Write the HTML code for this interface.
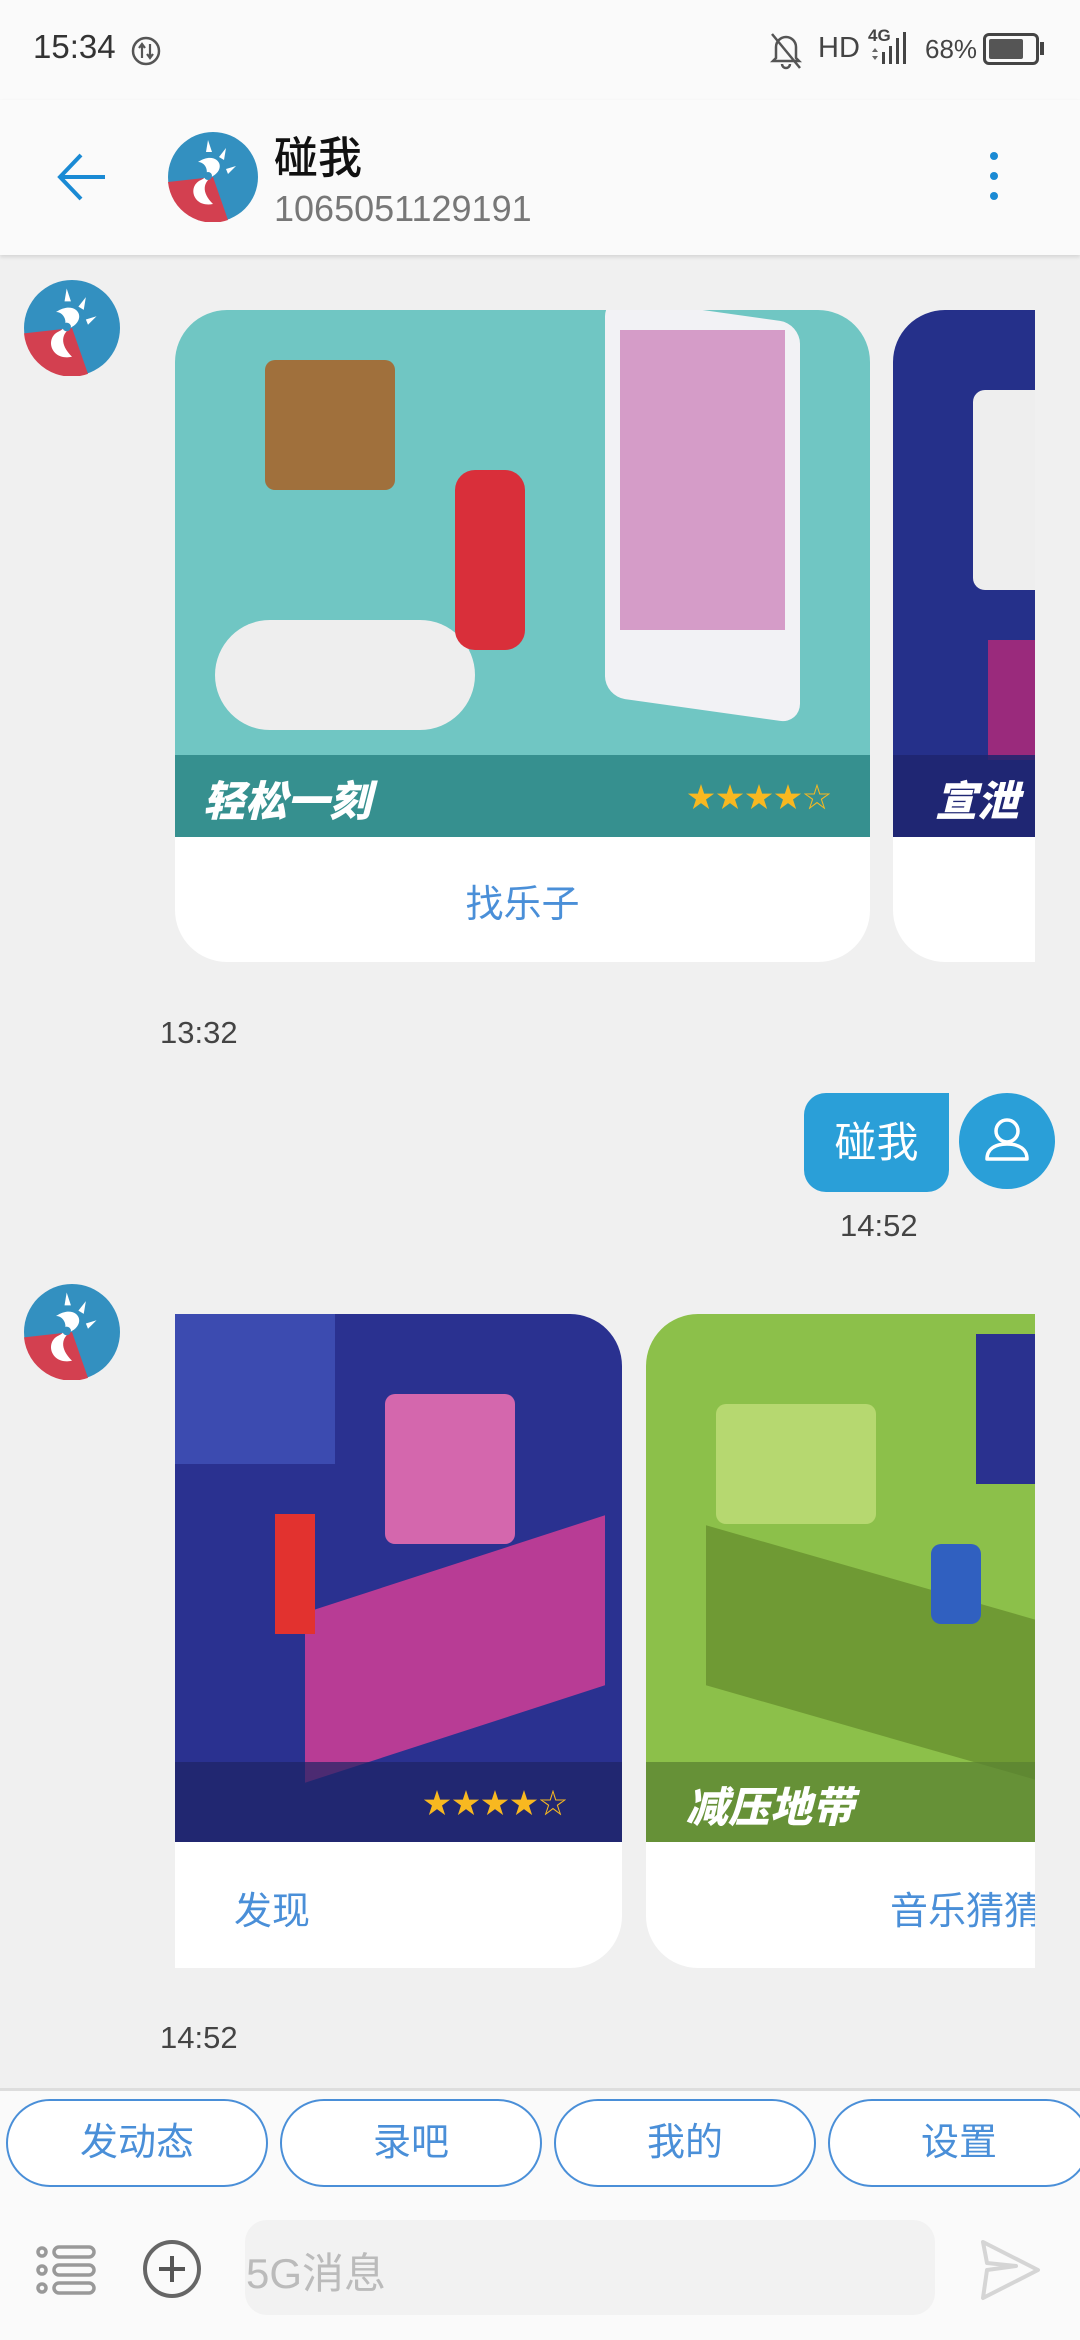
<!DOCTYPE html>
<html><head><meta charset="utf-8">
<style>
*{margin:0;padding:0;box-sizing:border-box}
body{width:1080px;height:2340px;background:#f0f0f0;font-family:"Liberation Sans","Noto Sans CJK SC",sans-serif;position:relative;overflow:hidden}
.abs{position:absolute}
.status{left:0;top:0;width:1080px;height:100px;background:#fafafa}
.header{left:0;top:100px;width:1080px;height:155px;background:#fafafa;box-shadow:0 2px 4px rgba(0,0,0,.12)}
.av{border-radius:50%;overflow:hidden}
.card{background:#fff;border-radius:52px;overflow:hidden}
.btxt{color:#4a8fd8;font-size:38px}
.time{color:#444;font-size:31px}
.qb{top:2099px;height:88px;border:2px solid #4a8fd8;border-radius:44px;background:#fff;color:#4a8fd8;font-size:38px;text-align:center;line-height:84px}
</style></head><body>
<div class="abs status"></div>
<div class="abs" style="left:33px;top:28px;font-size:33px;color:#333">15:34</div>
<svg class="abs" style="left:130px;top:35px" width="32" height="32" viewBox="0 0 32 32"><circle cx="16" cy="16" r="13" fill="none" stroke="#555" stroke-width="2.5"/><path d="M12 9v14M20 9v14M9 13l3-4 3 4M17 19l3 4 3-4" fill="none" stroke="#555" stroke-width="2.2"/></svg>
<svg class="abs" style="left:768px;top:30px" width="36" height="40" viewBox="0 0 36 40"><path d="M8 28V17a10 10 0 0 1 20 0v11l3 3H5z M14 34a4 4 0 0 0 8 0" fill="none" stroke="#555" stroke-width="2.5"/><path d="M4 4l28 34" stroke="#555" stroke-width="2.5"/></svg>
<div class="abs" style="left:818px;top:32px;font-size:29px;color:#444">HD</div>
<div class="abs" style="left:868px;top:26px;font-size:17px;color:#444;font-weight:bold">4G</div>
<svg class="abs" style="left:868px;top:30px" width="50" height="36" viewBox="0 0 50 36"><rect x="14" y="22" width="3" height="12" fill="#444"/><rect x="21" y="16" width="3" height="18" fill="#444"/><rect x="28" y="8" width="3" height="26" fill="#444"/><rect x="35" y="2" width="3" height="32" fill="#444"/><path d="M4 22l3-4 3 4zM4 26l3 4 3-4z" fill="#666"/></svg>
<div class="abs" style="left:925px;top:34px;font-size:26px;color:#444">68%</div>
<div class="abs" style="left:983px;top:33px;width:56px;height:32px;border:3px solid #444;border-radius:6px"></div>
<div class="abs" style="left:989px;top:39px;width:34px;height:20px;background:#555;border-radius:2px"></div>
<div class="abs" style="left:1040px;top:42px;width:4px;height:13px;background:#444"></div>

<div class="abs header"></div>
<svg class="abs" style="left:55px;top:150px" width="55" height="55" viewBox="0 0 55 55"><path d="M50 27H6M26 5L5 27l21 22" fill="none" stroke="#1a8ad4" stroke-width="4"/></svg>
<svg class="abs" style="left:168px;top:132px" width="90" height="90" viewBox="0 0 90 90"><circle cx="45" cy="45" r="45" fill="#3390c0"/><path d="M0 50L45 45L60 88A45 45 0 0 1 0 50z" fill="#d34050"/><path d="M30 30c18-12 30 5 15 14c-10 6-12 16 0 28c-20 4-26-18-12-24c10-4 6-18-3-18z" fill="#fff"/><circle cx="40" cy="44" r="4" fill="#3390c0"/><path d="M40 8l4 12h-6zM58 16l-2 12-5-3zM68 34l-8 8-2-5z" fill="#fff"/></svg>
<div class="abs" style="left:274px;top:122px;font-size:44px;color:#111;font-family:'Noto Sans CJK SC',sans-serif;font-weight:500">碰我</div>
<div class="abs" style="left:274px;top:188px;font-size:36px;color:#777">1065051129191</div>
<div class="abs" style="left:990px;top:152px;width:8px;height:8px;border-radius:50%;background:#1a8ad4"></div>
<div class="abs" style="left:990px;top:172px;width:8px;height:8px;border-radius:50%;background:#1a8ad4"></div>
<div class="abs" style="left:990px;top:192px;width:8px;height:8px;border-radius:50%;background:#1a8ad4"></div>

<!-- left avatar 1 -->
<svg class="abs" style="left:24px;top:280px" width="96" height="96" viewBox="0 0 90 90"><circle cx="45" cy="45" r="45" fill="#3390c0"/><path d="M0 50L45 45L60 88A45 45 0 0 1 0 50z" fill="#d34050"/><path d="M30 30c18-12 30 5 15 14c-10 6-12 16 0 28c-20 4-26-18-12-24c10-4 6-18-3-18z" fill="#fff"/><circle cx="40" cy="44" r="4" fill="#3390c0"/><path d="M40 8l4 12h-6zM58 16l-2 12-5-3zM68 34l-8 8-2-5z" fill="#fff"/></svg>

<!-- card 1 -->
<div class="abs card" style="left:175px;top:310px;width:695px;height:652px">
 <div class="abs" style="left:0;top:0;width:695px;height:527px;background:#70c6c3"></div>
 <div class="abs" style="left:430px;top:0;width:195px;height:400px;background:#f2f2f5;border-radius:20px;transform:skewY(8deg)"></div>
 <div class="abs" style="left:445px;top:20px;width:165px;height:300px;background:#d59cc8"></div>
 <div class="abs" style="left:40px;top:310px;width:260px;height:110px;background:#eee;border-radius:55px"></div>
 <div class="abs" style="left:90px;top:50px;width:130px;height:130px;background:#a0703c;border-radius:10px"></div>
 <div class="abs" style="left:280px;top:160px;width:70px;height:180px;background:#d92f3a;border-radius:20px"></div>
 <div class="abs" style="left:0;top:445px;width:695px;height:82px;background:rgba(40,130,130,.8)"></div>
 <div class="abs" style="left:28px;top:458px;font-size:42px;color:#fff;font-weight:900;font-style:italic">轻松一刻</div>
 <div class="abs" style="left:512px;top:466px;font-size:28px;color:#f8b820;letter-spacing:1px">★★★★☆</div>
 <div class="abs btxt" style="left:0;top:563px;width:695px;text-align:center">找乐子</div>
</div>
<!-- card 2 partial -->
<div class="abs" style="left:893px;top:310px;width:142px;height:652px;overflow:hidden">
 <div class="abs card" style="left:0;top:0;width:400px;height:652px">
  <div class="abs" style="left:0;top:0;width:400px;height:527px;background:#25308a"></div>
  <div class="abs" style="left:80px;top:80px;width:80px;height:200px;background:#eee;border-radius:12px"></div>
  <div class="abs" style="left:95px;top:330px;width:60px;height:120px;background:#9a2a7c"></div>
  <div class="abs" style="left:0;top:445px;width:400px;height:82px;background:rgba(30,36,110,.85)"></div>
  <div class="abs" style="left:42px;top:458px;font-size:42px;color:#fff;font-weight:900;font-style:italic">宣泄</div>
 </div>
</div>
<div class="abs time" style="left:160px;top:1015px">13:32</div>

<!-- sent bubble -->
<div class="abs" style="left:804px;top:1093px;width:145px;height:99px;background:#2a9fd8;border-radius:22px 0 22px 22px;color:#fff;font-size:42px;line-height:99px;text-align:center">碰我</div>
<svg class="abs" style="left:959px;top:1093px" width="96" height="96" viewBox="0 0 96 96"><circle cx="48" cy="48" r="48" fill="#2a9fd8"/><circle cx="48" cy="38" r="11" fill="none" stroke="#fff" stroke-width="3.5"/><path d="M28 66c0-10 8-15 20-15s20 5 20 15z" fill="none" stroke="#fff" stroke-width="3.5" stroke-linejoin="round"/></svg>
<div class="abs time" style="left:840px;top:1208px">14:52</div>

<!-- left avatar 2 -->
<svg class="abs" style="left:24px;top:1284px" width="96" height="96" viewBox="0 0 90 90"><circle cx="45" cy="45" r="45" fill="#3390c0"/><path d="M0 50L45 45L60 88A45 45 0 0 1 0 50z" fill="#d34050"/><path d="M30 30c18-12 30 5 15 14c-10 6-12 16 0 28c-20 4-26-18-12-24c10-4 6-18-3-18z" fill="#fff"/><circle cx="40" cy="44" r="4" fill="#3390c0"/><path d="M40 8l4 12h-6zM58 16l-2 12-5-3zM68 34l-8 8-2-5z" fill="#fff"/></svg>

<!-- card 3 -->
<div class="abs card" style="left:175px;top:1314px;width:447px;height:654px;border-top-left-radius:0;border-bottom-left-radius:0">
 <div class="abs" style="left:0;top:0;width:447px;height:528px;background:#2a3190"></div>
 <div class="abs" style="left:0;top:0;width:160px;height:150px;background:#3c4bb0"></div>
 <div class="abs" style="left:210px;top:80px;width:130px;height:150px;background:#d467ad;border-radius:10px"></div>
 <div class="abs" style="left:130px;top:250px;width:300px;height:170px;background:#b83c95;transform:skewY(-18deg)"></div>
 <div class="abs" style="left:100px;top:200px;width:40px;height:120px;background:#e2322f"></div>
 <div class="abs" style="left:0;top:448px;width:447px;height:80px;background:rgba(30,36,100,.7)"></div>
 <div class="abs" style="left:248px;top:468px;font-size:28px;color:#f8b820;letter-spacing:1px">★★★★☆</div>
 <div class="abs btxt" style="left:59px;top:1566px"></div>
 <div class="abs btxt" style="left:59px;top:566px">发现</div>
</div>
<!-- card 4 -->
<div class="abs" style="left:646px;top:1314px;width:389px;height:654px;overflow:hidden">
 <div class="abs card" style="left:0;top:0;width:450px;height:654px">
  <div class="abs" style="left:0;top:0;width:450px;height:528px;background:#8cc04a"></div>
  <div class="abs" style="left:70px;top:90px;width:160px;height:120px;background:#b6d870;border-radius:10px"></div>
  <div class="abs" style="left:60px;top:260px;width:340px;height:160px;background:#6f9a34;transform:skewY(16deg)"></div>
  <div class="abs" style="left:330px;top:20px;width:60px;height:150px;background:#2a318f"></div>
  <div class="abs" style="left:285px;top:230px;width:50px;height:80px;background:#3060c0;border-radius:10px"></div>
  <div class="abs" style="left:0;top:448px;width:450px;height:80px;background:rgba(90,130,50,.75)"></div>
  <div class="abs" style="left:40px;top:460px;font-size:42px;color:#fff;font-weight:900;font-style:italic">减压地带</div>
  <div class="abs btxt" style="left:244px;top:566px;white-space:nowrap">音乐猜猜</div>
 </div>
</div>
<div class="abs time" style="left:160px;top:2020px">14:52</div>

<!-- bottom -->
<div class="abs" style="left:0;top:2088px;width:1080px;height:252px;background:#fafafa;border-top:3px solid #ddd"></div>
<div class="abs qb" style="left:6px;width:262px">发动态</div>
<div class="abs qb" style="left:280px;width:262px">录吧</div>
<div class="abs qb" style="left:554px;width:262px">我的</div>
<div class="abs qb" style="left:828px;width:262px">设置</div>
<svg class="abs" style="left:36px;top:2244px" width="62" height="52" viewBox="0 0 62 52"><g fill="none" stroke="#999" stroke-width="3.5"><circle cx="6" cy="8" r="4"/><circle cx="6" cy="26" r="4"/><circle cx="6" cy="44" r="4"/><rect x="18" y="3" width="40" height="10" rx="5"/><rect x="18" y="21" width="40" height="10" rx="5"/><rect x="18" y="39" width="40" height="10" rx="5"/></g></svg>
<svg class="abs" style="left:141px;top:2238px" width="62" height="62" viewBox="0 0 62 62"><circle cx="31" cy="31" r="27" fill="none" stroke="#666" stroke-width="4"/><path d="M31 18v26M18 31h26" stroke="#555" stroke-width="4"/></svg>
<div class="abs" style="left:245px;top:2220px;width:690px;height:95px;background:#f2f2f2;border-radius:22px"></div>
<div class="abs" style="left:246px;top:2240px;font-size:42px;color:#bbb">5G消息</div>
<svg class="abs" style="left:978px;top:2238px" width="64" height="64" viewBox="0 0 64 64"><path d="M5 4L60 32L5 60L9 32L38 28L9 25z" fill="none" stroke="#d5d5d5" stroke-width="4" stroke-linejoin="round"/></svg>
</body></html>
